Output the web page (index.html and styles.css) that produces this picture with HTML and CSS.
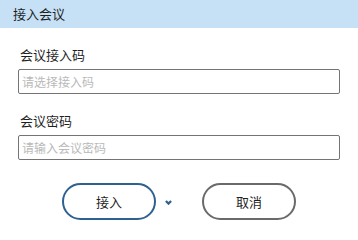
FILE: index.html
```html
<!DOCTYPE html>
<html>
<head>
    <title>接入会议</title>
    <link rel="stylesheet" href="styles.css">
</head>
<body>
    <div class="header">
        <span>接入会议</span>
    </div>
    <div class="content">
        <div class="form-group">
            <label for="join-code">会议接入码</label>
            <input type="text" id="join-code" placeholder="请选择接入码">
        </div>
        <div class="form-group">
            <label for="join-pwd">会议密码</label>
            <input type="text" id="join-pwd" placeholder="请输入会议密码">
        </div>
        <div class="button-row">
            <button class="join-btn">接入</button>
            <span class="more-icon">
                <svg width="7" height="5" viewBox="0 0 7 5">
                    <polyline points="0.9,0.9 3.5,3.6 6.1,0.9" fill="none" stroke="#2f6190" stroke-width="2.2"/>
                </svg>
            </span>
            <button class="cancel-btn">取消</button>
        </div>
    </div>
</body>
</html>
```

FILE: styles.css
```css
body {
    margin: 0;
    padding: 0;
    font-family: "Noto Sans CJK SC", "Noto Sans", sans-serif;
    background: #ffffff;
    color: #222222;
}

.header {
    height: 28px;
    line-height: 28px;
    padding-left: 13px;
    background: #c6e1f6;
    font-size: 13px;
    color: #1f1f1f;
}

.content {
    padding: 0 18px;
}

.form-group {
    display: flex;
    flex-direction: column;
    margin-top: 18px;
}

.form-group label {
    font-size: 13px;
    line-height: 18px;
    padding-left: 2px;
    margin-bottom: 5px;
    color: #1f1f1f;
}

.form-group input {
    box-sizing: border-box;
    width: 322px;
    height: 25px;
    border: 1px solid #747474;
    border-radius: 2px;
    padding: 0 3px;
    font-family: inherit;
    font-size: 12px;
    color: #333333;
    outline: none;
}

.form-group input::placeholder {
    color: #b9b9b9;
}

.button-row {
    display: flex;
    justify-content: center;
    align-items: center;
    margin-top: 23px;
}

.button-row button {
    box-sizing: border-box;
    width: 94px;
    height: 37px;
    border-radius: 19px;
    background: #ffffff;
    font-family: inherit;
    font-size: 13px;
    color: #1f1f1f;
    cursor: pointer;
}

.join-btn {
    border: 2px solid #2f6190;
}

.cancel-btn {
    border: 2px solid #6a6a6a;
}

.more-icon {
    display: flex;
    width: 7px;
    margin: 2px 30px 0 9px;
}
```
